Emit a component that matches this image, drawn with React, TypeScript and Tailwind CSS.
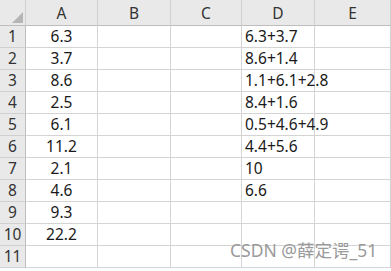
import React from 'react';

const colA = ['6.3', '3.7', '8.6', '2.5', '6.1', '11.2', '2.1', '4.6', '9.3', '22.2', ''];
const colD = ['6.3+3.7', '8.6+1.4', '1.1+6.1+2.8', '8.4+1.6', '0.5+4.6+4.9', '4.4+5.6', '10', '6.6', '', '', ''];
const headers = ['A', 'B', 'C', 'D', 'E'];

const App = () => {
  return (
    <div
      className="relative w-[391px] h-[271px] overflow-hidden bg-white text-[15.5px] text-[#1a1a1a]"
      style={{ fontFamily: '"Noto Sans", "Noto Sans CJK SC", sans-serif' }}
    >
      <div className="grid grid-cols-[26px_72px_73px_71px_73px_76px] grid-rows-[26px_repeat(11,22px)]">
        {/* header row */}
        <div className="relative bg-[#e9e9e9] border-r border-b border-r-[#d0d0d0] border-b-[#bdbdbd]">
          <svg className="absolute left-[12px] top-[12px]" width="11" height="11" viewBox="0 0 11 11">
            <polygon points="11,0 11,11 0,11" fill="#b5b5b5" />
          </svg>
        </div>
        {headers.map((h) => (
          <div
            key={h}
            className="flex items-end justify-center bg-[#e9e9e9] border-r border-b border-r-[#d0d0d0] border-b-[#bdbdbd] text-[#333] leading-none"
          >
            <span className="mb-[4px]">{h}</span>
          </div>
        ))}

        {colA.map((a, i) => (
          <React.Fragment key={i}>
            <div className="flex items-center justify-center pt-[1px] bg-[#e9e9e9] border-r border-b border-r-[#bdbdbd] border-b-[#d0d0d0] text-[#333] leading-none">
              {i + 1}
            </div>
            <div className="flex items-center justify-center border-r border-b border-[#d4d4d4] leading-none">
              {a}
            </div>
            <div className="border-r border-b border-[#d4d4d4]" />
            <div className="border-r border-b border-[#d4d4d4]" />
            <div className="flex items-center pl-[3px] border-r border-b border-[#d4d4d4] leading-none whitespace-nowrap">
              {colD[i]}
            </div>
            <div className="border-r border-b border-[#d4d4d4]" />
          </React.Fragment>
        ))}
      </div>

      <div className="absolute left-[230px] top-[242px] text-[17.5px] text-[#9a9a9a] leading-none whitespace-nowrap">
        CSDN @薛定谔_51
      </div>
    </div>
  );
};

export default App;
